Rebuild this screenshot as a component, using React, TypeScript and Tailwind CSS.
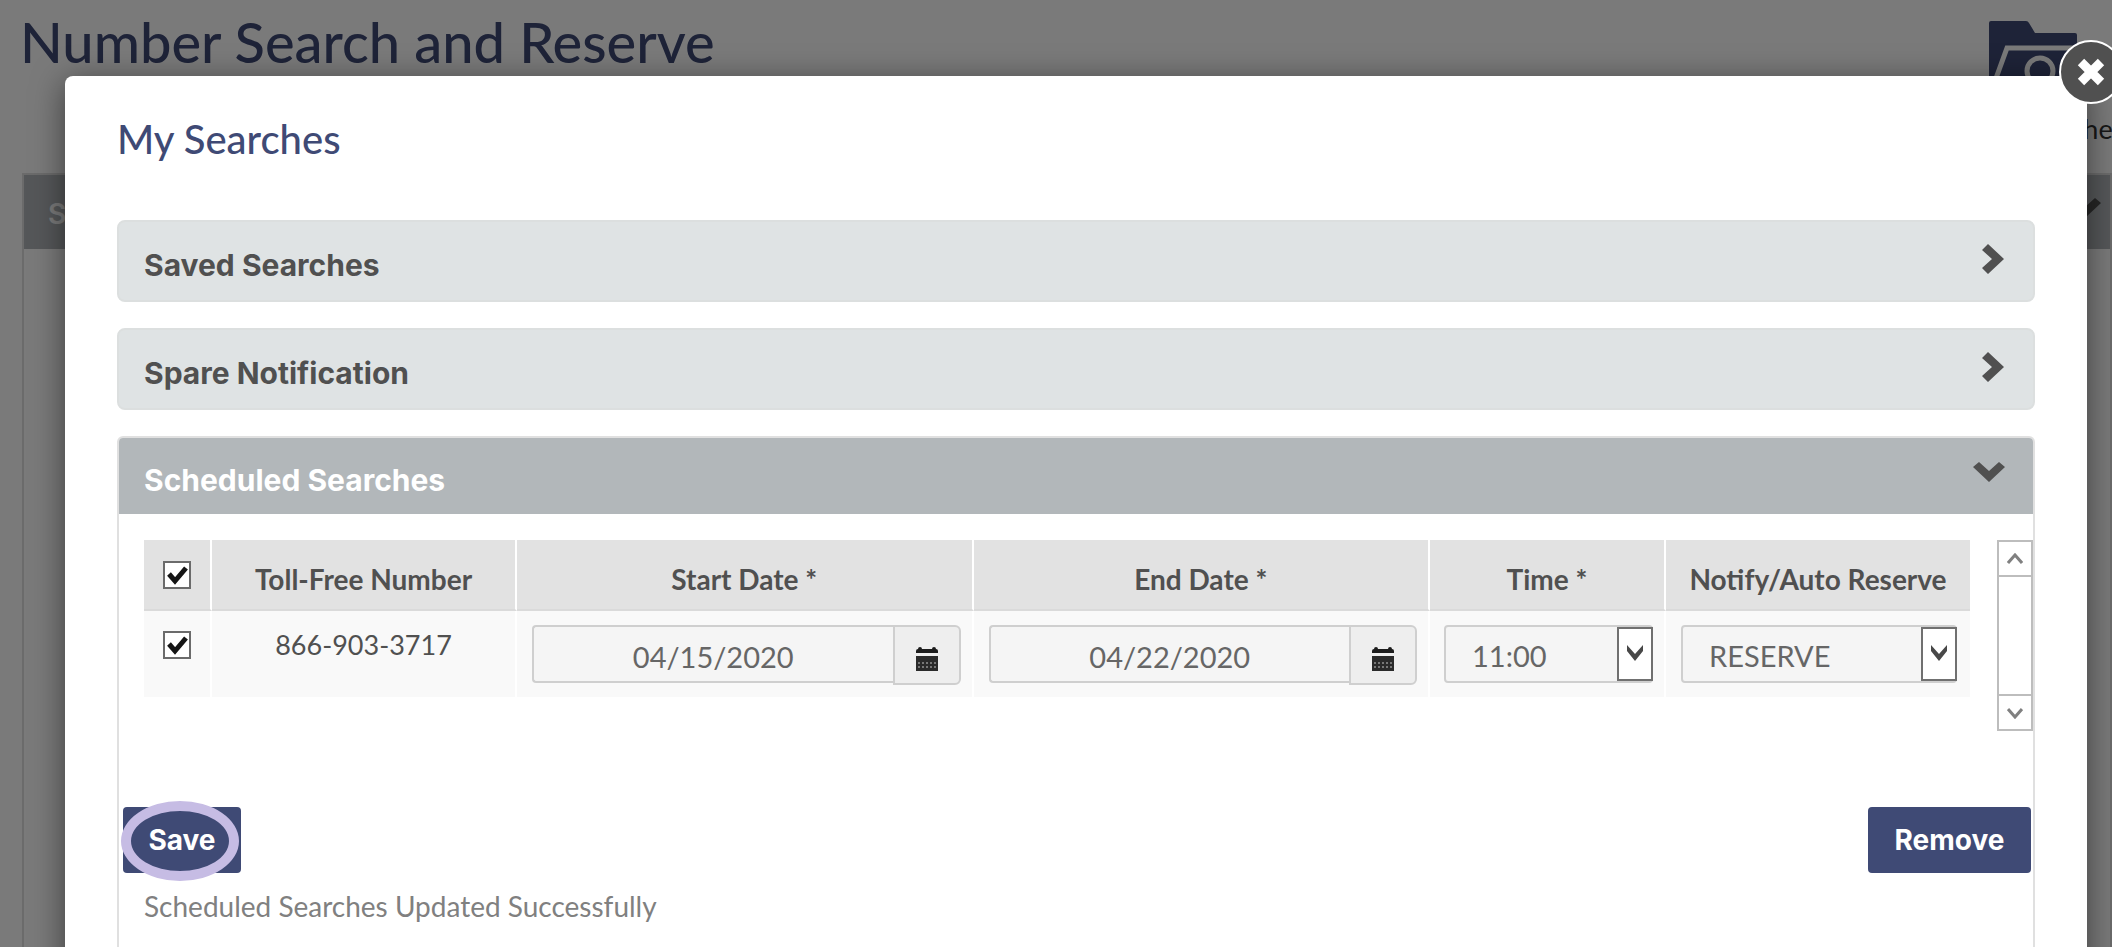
import { useState } from "react";

const scheduledSearches = [
  { id: 1, number: "866-903-3717", start: "04/15/2020", end: "04/22/2020", time: "11:00", action: "RESERVE" },
];

const collapsedPanels = ["Saved Searches", "Spare Notification"];

function ChevronRight() {
  return (
    <svg width="24" height="32" viewBox="0 0 24 32" aria-hidden="true">
      <path d="M1 7 7 1 23 16 7 31 1 25 11 16Z" fill="#505050" />
    </svg>
  );
}

function ChevronDown() {
  return (
    <svg width="34" height="22" viewBox="0 0 34 22" aria-hidden="true">
      <path d="M1 6 7 1 17 10 27 1 33 6 17 21Z" fill="currentColor" />
    </svg>
  );
}

function CalendarIcon() {
  return (
    <svg width="22" height="24" viewBox="0 0 22 24" aria-hidden="true">
      <path d="M0 6V4q0-2 2-2 0-2 2-2t2 2h10q0-2 2-2t2 2q2 0 2 2v2Z" fill="#1c1c1c" />
      <path d="M0 9h22v15H0Z" fill="#2a2a2a" />
      <path d="M2 16h18M2 20h18" stroke="#777" strokeWidth="2" strokeDasharray="2 2" />
    </svg>
  );
}

function FolderIcon() {
  return (
    <svg width="88" height="76" viewBox="0 0 88 76" aria-hidden="true">
      <path d="M0 2Q0 0 2 0H37q2 0 3 2l6 10H86q2 0 2 2V76H0Z" fill="#3f4a75" />
      <path d="M6 60 18 27H88" fill="none" stroke="#fff" strokeWidth="5" />
      <circle cx="51" cy="50" r="13" fill="none" stroke="#fff" strokeWidth="5" />
      <path d="m60 60 12 12" stroke="#fff" strokeWidth="6" />
    </svg>
  );
}

function CheckBox({ label, checked, onChange }: { label: string; checked: boolean; onChange: () => void }) {
  return (
    <label className="relative mx-auto block size-7">
      <input
        type="checkbox"
        aria-label={label}
        checked={checked}
        onChange={onChange}
        className="peer block size-7 appearance-none border-2 border-[#6b6b6b] bg-white"
      />
      <svg viewBox="0 0 28 28" aria-hidden="true" className="pointer-events-none absolute inset-0 hidden size-7 peer-checked:block">
        <path d="M6 13 12 20 23 7" fill="none" stroke="#141414" strokeWidth="5" />
      </svg>
    </label>
  );
}

function DateField({ label, value }: { label: string; value: string }) {
  return (
    <div className="flex items-start">
      <input
        type="text"
        aria-label={label}
        defaultValue={value}
        className="h-[58px] w-0 flex-1 rounded-l border-2 border-r-0 border-[#cfcfcf] bg-[#f5f5f5] pt-1 text-center text-[29px] text-[#666]"
      />
      <button
        type="button"
        aria-label={`Pick ${label}`}
        className="flex h-[60px] w-[68px] items-center justify-center rounded-r-md border-2 border-[#cfcfcf] bg-[#eee] pt-2"
      >
        <CalendarIcon />
      </button>
    </div>
  );
}

function SelectField({ label, value, options }: { label: string; value: string; options: string[] }) {
  return (
    <div className="relative">
      <select
        aria-label={label}
        defaultValue={value}
        className="block h-[58px] w-full appearance-none rounded border-2 border-[#cfcfcf] bg-[#f5f5f5] pt-1 pl-[26px] text-[29px] text-[#666]"
      >
        {options.map((option) => (
          <option key={option}>{option}</option>
        ))}
      </select>
      <span className="pointer-events-none absolute inset-y-[2px] right-0 flex w-[36px] items-center justify-center border-2 border-[#707070] bg-white">
        <svg width="16" height="18" viewBox="0 0 16 18" aria-hidden="true">
          <path d="M0 0 8 9 16 0V6L8 16 0 6Z" fill="#484848" />
        </svg>
      </span>
    </div>
  );
}

function PageBehind() {
  return (
    <div className="px-[20px]">
      <header className="flex h-[173px] items-start justify-between">
        <h1 className="pt-2 text-[56px] leading-[68px] font-medium text-[#3f4a75]">Number Search and Reserve</h1>
        <a href="#searches" className="-mr-5 flex w-[138px] flex-col items-start pt-[21px] text-[27px] whitespace-nowrap text-[#333]">
          <span className="pl-[15px]">
            <FolderIcon />
          </span>
          <span className="leading-[64px]">My Searches</span>
        </a>
      </header>
      <section className="-mr-[20px] ml-[2px] border-2 border-[#e0e0e0]">
        <h2 className="flex h-[74px] items-center justify-between bg-[#b2b7ba] pt-1 pr-2 pl-6 font-['Inter',sans-serif] text-[28px] font-semibold text-white">
          Search
          <span className="-mt-3 text-[#505050]">
            <ChevronDown />
          </span>
        </h2>
        <div className="h-screen" />
      </section>
    </div>
  );
}

export default function App() {
  const [selected, setSelected] = useState<number[]>([1]);
  const allSelected = selected.length === scheduledSearches.length;

  const toggle = (id: number) =>
    setSelected((ids) => (ids.includes(id) ? ids.filter((i) => i !== id) : [...ids, id]));

  return (
    <div className="relative h-screen overflow-hidden bg-white font-['Lato',sans-serif]">
      <PageBehind />

      <div className="absolute inset-0 bg-black/52 pt-[76px] pr-[25px] pl-[65px]">
        <div role="dialog" aria-labelledby="dialog-title" className="relative min-h-screen rounded-lg bg-white px-[52px] pt-[38px] shadow-[0_6px_32px_0_rgba(0,0,0,0.5)]">
          <button
            type="button"
            aria-label="Close"
            className="absolute -top-9 -right-9 flex size-16 items-center justify-center rounded-full border-2 border-white bg-[#505050]"
          >
            <svg width="32" height="30" viewBox="0 0 32 30" aria-hidden="true">
              <path d="M6 5 26 25M26 5 6 25" stroke="#fff" strokeWidth="9" />
            </svg>
          </button>

          <h2 id="dialog-title" className="mb-[56px] text-[40px] leading-[50px] font-medium text-[#3f4a75]">
            My Searches
          </h2>

          <div className="space-y-[26px]">
            {collapsedPanels.map((title) => (
              <button
                key={title}
                type="button"
                aria-expanded={false}
                className="flex h-[82px] w-full items-center justify-between rounded-lg border-2 border-[#dcdfdf] bg-[#dfe3e4] pt-2 pr-[28px] pl-[25px] font-['Inter',sans-serif] text-[30px] font-bold text-[#505050]"
              >
                {title}
                <span className="-mt-3">
                  <ChevronRight />
                </span>
              </button>
            ))}

            <section className="min-h-screen rounded-t-md border-2 border-[#e0e0e0]">
              <button
                type="button"
                aria-expanded={true}
                className="flex h-[76px] w-full items-center justify-between rounded-t bg-[#b2b7ba] pt-2 pr-[27px] pl-[25px] font-['Inter',sans-serif] text-[30px] font-bold text-white"
              >
                Scheduled Searches
                <span className="-mt-4 text-[#505050]">
                  <ChevronDown />
                </span>
              </button>

              <div className="flex h-[217px] items-start pt-[26px] pl-[25px]">
                <table className="flex-1 table-fixed border-separate border-spacing-0 text-center text-[#505050]">
                  <colgroup>
                    <col className="w-[68px]" />
                    <col className="w-[305px]" />
                    <col className="w-[25%]" />
                    <col className="w-[25%]" />
                    <col className="w-[236px]" />
                    <col className="w-[304px]" />
                  </colgroup>
                  <thead>
                    <tr className="h-[71px] bg-[#e2e2e2] text-[28px] *:border-b-2 *:border-b-[#dadada] *:p-0 *:not-last:border-r-2 *:not-last:border-r-white">
                      <th>
                        <CheckBox
                          label="Select all"
                          checked={allSelected}
                          onChange={() => setSelected(allSelected ? [] : scheduledSearches.map((s) => s.id))}
                        />
                      </th>
                      <th>
                        <div className="pt-2">Toll-Free Number</div>
                      </th>
                      <th>
                        <div className="pt-2">Start Date *</div>
                      </th>
                      <th>
                        <div className="pt-2">End Date *</div>
                      </th>
                      <th>
                        <div className="pt-2">Time *</div>
                      </th>
                      <th>
                        <div className="pt-2">Notify/Auto Reserve</div>
                      </th>
                    </tr>
                  </thead>
                  <tbody>
                    {scheduledSearches.map((search) => (
                      <tr key={search.id} className="h-[86px] bg-[#f9f9f9] align-top text-[27px] *:pt-[14px] *:not-last:border-r-2 *:not-last:border-r-white">
                        <td>
                          <div className="pt-[6px]">
                            <CheckBox
                              label={`Select ${search.number}`}
                              checked={selected.includes(search.id)}
                              onChange={() => toggle(search.id)}
                            />
                          </div>
                        </td>
                        <td className="leading-[40px]">{search.number}</td>
                        <td className="pr-[11px] pl-[15px]">
                          <DateField label="Start Date" value={search.start} />
                        </td>
                        <td className="pr-[11px] pl-[15px]">
                          <DateField label="End Date" value={search.end} />
                        </td>
                        <td className="pr-[11px] pl-[14px]">
                          <SelectField label="Time" value={search.time} options={["11:00", "12:00", "13:00"]} />
                        </td>
                        <td className="pr-[13px] pl-[15px]">
                          <SelectField label="Notify/Auto Reserve" value={search.action} options={["RESERVE", "NOTIFY"]} />
                        </td>
                      </tr>
                    ))}
                  </tbody>
                </table>

                <div className="ml-[27px] flex h-[191px] w-[36px] flex-col justify-between border-2 border-[#bdbdbd] bg-white">
                  <button type="button" aria-label="Scroll up" className="flex h-[35px] items-center justify-center border-b-2 border-[#bdbdbd]">
                    <svg width="16" height="12" viewBox="0 0 16 12" aria-hidden="true">
                      <path d="M1 10 8 2 15 10" fill="none" stroke="#808080" strokeWidth="3" />
                    </svg>
                  </button>
                  <button type="button" aria-label="Scroll down" className="flex h-[35px] items-center justify-center border-t-2 border-[#bdbdbd]">
                    <svg width="16" height="12" viewBox="0 0 16 12" aria-hidden="true">
                      <path d="M1 2 8 10 15 2" fill="none" stroke="#808080" strokeWidth="3" />
                    </svg>
                  </button>
                </div>
              </div>

              <div className="mt-[76px] flex justify-between pr-[2px] pl-1 font-['Inter',sans-serif] text-[28px] font-bold text-white">
                <button type="button" className="relative h-[66px] w-[118px] rounded bg-[#3f4a75]">
                  Save
                  <span className="absolute -top-[6px] right-[2px] -bottom-[8px] -left-[2px] rounded-[50%] border-[10px] border-[#c6bce4]" />
                </button>
                <button type="button" className="h-[66px] w-[163px] rounded bg-[#3f4a75]">
                  Remove
                </button>
              </div>
              <p role="status" className="pt-[13px] pl-[25px] text-[28px] leading-[40px] text-[#808080]">
                Scheduled Searches Updated Successfully
              </p>
            </section>
          </div>
        </div>
      </div>
    </div>
  );
}
